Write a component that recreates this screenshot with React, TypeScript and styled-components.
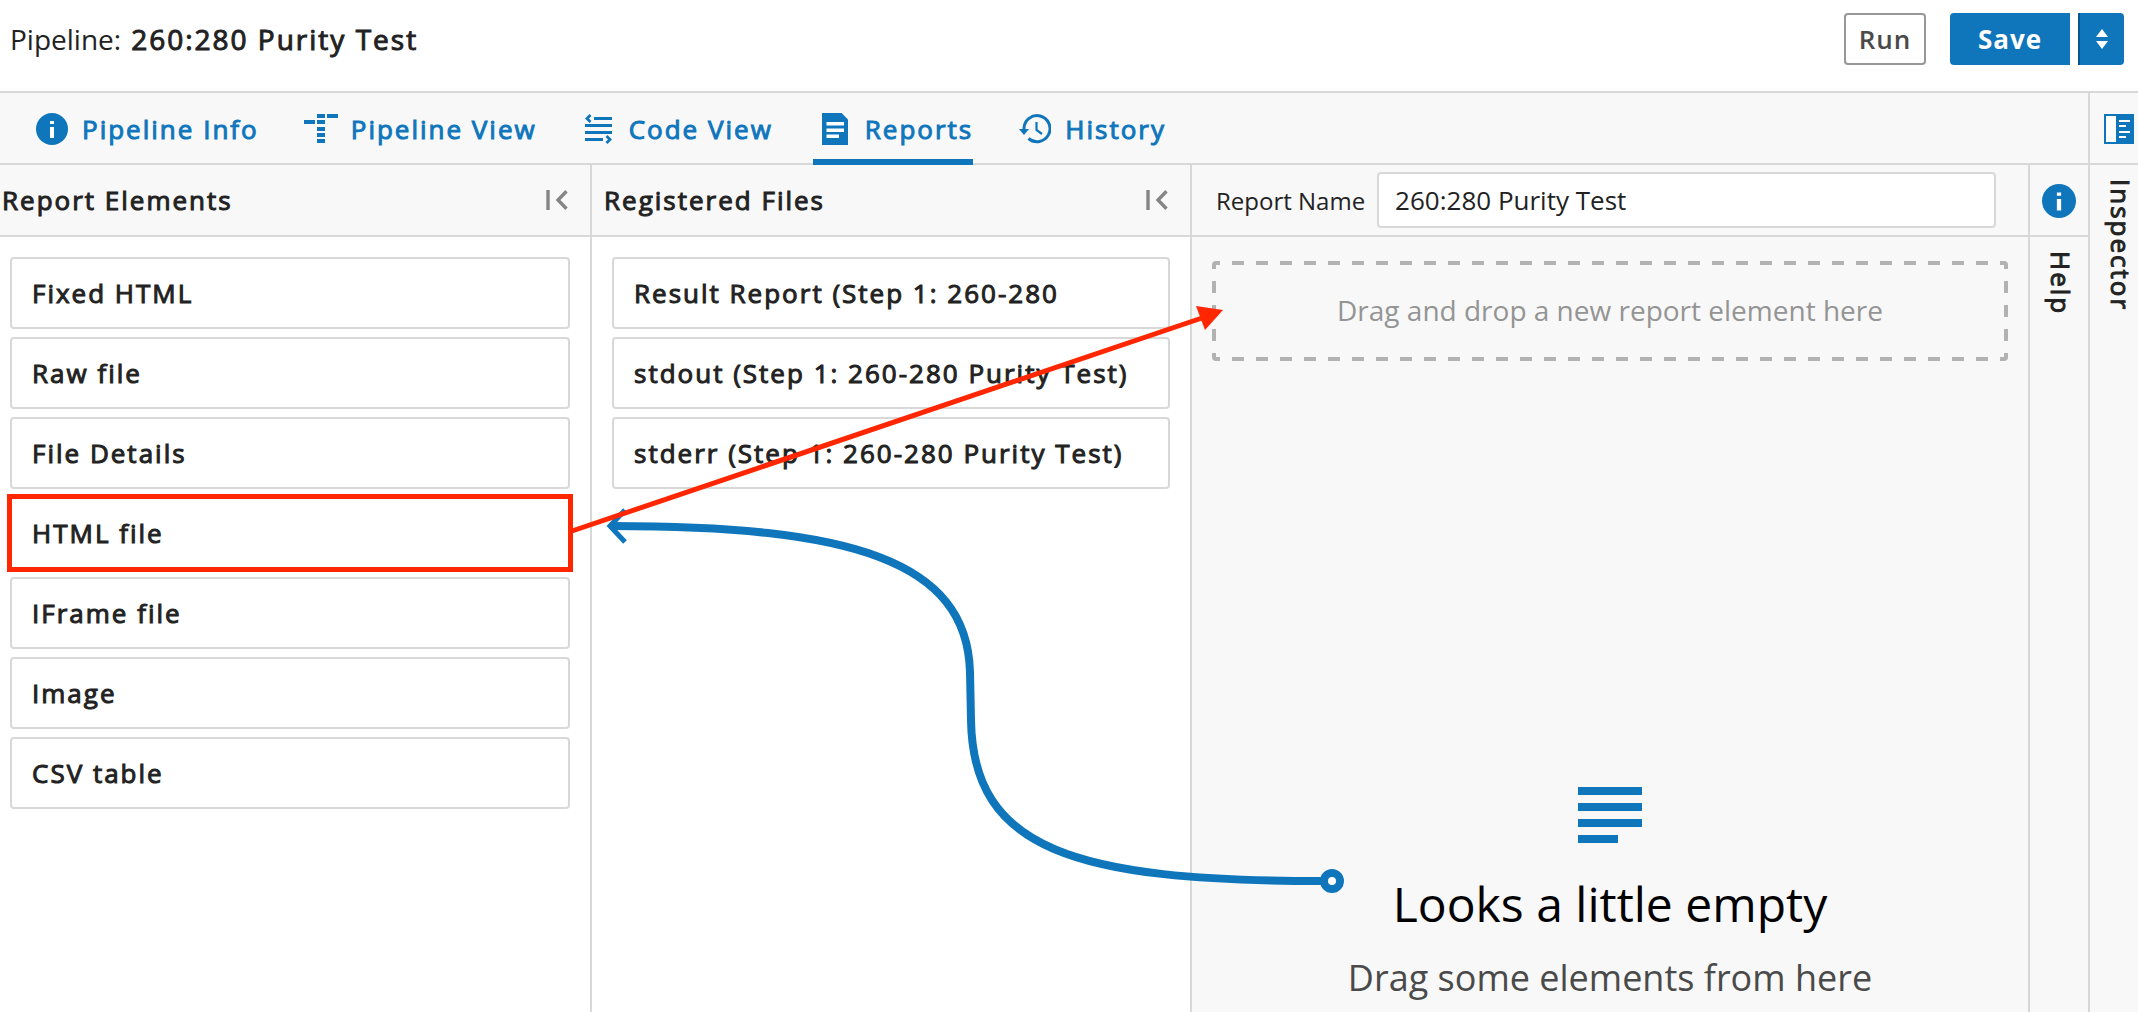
import React from "react";
import styled, { createGlobalStyle, css } from "styled-components";

const blue = "#0f76bc";
const line = "#d8d8d8";
const ink = "#222222";
const pale = "#f8f8f8";
const red = "#ff2600";

const Global = createGlobalStyle`
  *, *::before, *::after { box-sizing: border-box; }
  body {
    margin: 0;
    background: #ffffff;
    color: ${ink};
    font-family: "Open Sans", "Noto Sans", sans-serif;
    font-size: 26px;
    overflow: hidden;
  }
  button, input { font: inherit; }
  h1, h2, p, ul { margin: 0; padding: 0; }
`;

/* Emphasised text: the regular face, thickened and openly tracked. */
const emphasis = css`
  font-weight: 400;
  letter-spacing: 2px;
  -webkit-text-stroke: 1px currentColor;
`;

const Page = styled.div`
  display: flex;
  flex-direction: column;
  height: 100vh;
`;

const Header = styled.header`
  display: flex;
  align-items: center;
  justify-content: space-between;
  height: 93px;
  padding: 0 14px 14px 10px;
  border-bottom: 2px solid ${line};
`;

const Title = styled.h1`
  display: flex;
  gap: 10px;
  font-size: 28px;
  font-weight: 400;
  line-height: 40px;

  strong { ${emphasis} }
`;

const Actions = styled.div`
  display: flex;
  gap: 24px;
`;

const SaveGroup = styled.div`
  display: flex;
  gap: 8px;
`;

const Button = styled.button`
  display: flex;
  align-items: center;
  justify-content: center;
  height: 52px;
  padding: 0;
  border: 0;
  font-weight: 600;
  letter-spacing: 1px;
  cursor: pointer;
`;

const RunButton = styled(Button)`
  width: 82px;
  border: 2px solid #979797;
  border-radius: 4px;
  background: #ffffff;
  color: #4a4a4a;
`;

const SaveButton = styled(Button)`
  width: 120px;
  border-radius: 4px 0 0 4px;
  background: ${blue};
  color: #ffffff;
  font-weight: 700;
`;

const SaveMenuButton = styled(Button)`
  width: 46px;
  border-left: 2px solid #07568c;
  border-radius: 0 4px 4px 0;
  background: ${blue};
  color: #ffffff;
`;

const Body = styled.div`
  display: flex;
  flex: 1;
  min-height: 0;
`;

const Main = styled.main`
  display: flex;
  flex: 1;
  flex-direction: column;
  min-width: 0;
`;

const Tabs = styled.nav`
  display: flex;
  gap: 40px;
  height: 72px;
  padding-left: 30px;
  border-bottom: 2px solid ${line};
  background: ${pale};
`;

const Tab = styled.a<{ $active?: boolean }>`
  ${emphasis}
  display: flex;
  align-items: center;
  gap: 8px;
  height: 72px;
  padding-top: 6px;
  border-bottom: 6px solid ${(p) => (p.$active ? blue : "transparent")};
  color: ${blue};
  text-decoration: none;
  white-space: nowrap;
`;

const TabIcon = styled.span`
  display: flex;
  justify-content: center;
  width: 44px;
`;

const Workspace = styled.div`
  position: relative;
  display: flex;
  flex: 1;
  min-height: 0;
`;

const Panel = styled.section<{ $width: number }>`
  flex: none;
  width: ${(p) => p.$width}px;
  border-right: 2px solid ${line};
  background: #ffffff;
`;

const PanelHead = styled.div<{ $inset: number }>`
  display: flex;
  align-items: center;
  justify-content: space-between;
  height: 72px;
  padding: 0 22px 0 ${(p) => p.$inset}px;
  border-bottom: 2px solid ${line};
  background: ${pale};
`;

const PanelTitle = styled.h2`
  ${emphasis}
  font-size: 26px;
  line-height: 36px;
`;

const CollapseButton = styled.button`
  display: flex;
  padding: 0;
  border: 0;
  background: none;
  cursor: pointer;
`;

const CardList = styled.ul`
  display: flex;
  flex-direction: column;
  gap: 8px;
  padding: 20px;
  list-style: none;
`;

const ElementList = styled(CardList)`
  padding-left: 10px;
`;

const Card = styled.li<{ $marked?: boolean }>`
  ${emphasis}
  height: 72px;
  padding: 16px 20px;
  border: 2px solid ${line};
  border-radius: ${(p) => (p.$marked ? 0 : 4)}px;
  outline: ${(p) => (p.$marked ? `5px solid ${red}` : "none")};
  outline-offset: -2px;
  background: #ffffff;
  line-height: 36px;
  white-space: nowrap;
`;

const Canvas = styled.section`
  display: flex;
  flex: 1;
  flex-direction: column;
  min-width: 0;
  background: ${pale};
`;

const NameBar = styled.div`
  display: flex;
  flex: none;
  align-items: center;
  gap: 12px;
  height: 72px;
  padding: 0 32px 0 24px;
  border-bottom: 2px solid ${line};
`;

const NameLabel = styled.label`
  font-size: 24px;
  white-space: nowrap;
`;

const NameInput = styled.input`
  flex: 1;
  min-width: 0;
  height: 56px;
  padding: 0 16px;
  border: 2px solid ${line};
  border-radius: 4px;
  background: #ffffff;
  color: ${ink};
`;

const dashes = (angle: string) =>
  `repeating-linear-gradient(${angle}, #b2b2b2 0 8px, transparent 8px 20px, #b2b2b2 20px 24px)`;

const DropZone = styled.div`
  display: flex;
  flex: none;
  align-items: center;
  justify-content: center;
  height: 100px;
  margin: 24px 20px 0;
  padding-bottom: 2px;
  border-radius: 4px;
  background:
    ${dashes("90deg")} top / 100% 4px no-repeat,
    ${dashes("90deg")} bottom / 100% 4px no-repeat,
    ${dashes("180deg")} left / 4px 100% no-repeat,
    ${dashes("180deg")} right / 4px 100% no-repeat;
  color: #949494;
  font-size: 28px;
`;

const EmptyState = styled.div`
  display: flex;
  flex-direction: column;
  align-items: center;
  margin-top: 426px;
  text-align: center;
`;

const EmptyTitle = styled.h2`
  margin-top: 28px;
  color: #000000;
  font-size: 48px;
  font-weight: 400;
  line-height: 66px;
`;

const EmptyText = styled.p`
  margin-top: 16px;
  color: #4a4a4a;
  font-size: 36px;
  line-height: 50px;
`;

const Rail = styled.aside<{ $width: number }>`
  display: flex;
  flex: none;
  flex-direction: column;
  width: ${(p) => p.$width}px;
  overflow: hidden;
  border-left: 2px solid ${line};
  background: ${pale};
`;

const RailHead = styled.div`
  display: flex;
  flex: none;
  align-items: center;
  justify-content: center;
  width: 58px;
  height: 72px;
  padding-top: 2px;
  border-bottom: 2px solid ${line};
`;

const RailLabel = styled.span`
  ${emphasis}
  width: 62px;
  padding-top: 14px;
  line-height: 62px;
  writing-mode: vertical-rl;
`;

const Annotations = styled.svg`
  position: absolute;
  top: 0;
  left: 0;
  overflow: visible;
  pointer-events: none;
`;

const InfoIcon = ({ size }: { size: number }) => (
  <svg width={size} height={size} viewBox="0 0 32 32" aria-hidden="true">
    <circle cx="16" cy="16" r="16" fill={blue} />
    <path d="M14 8h4v3h-4zM14 14h4v11h-4z" fill="#fff" />
  </svg>
);

const PipelineIcon = () => (
  <svg width="34" height="30" viewBox="0 0 34 30" fill={blue} aria-hidden="true">
    <path d="M13 0h8v4h-8zM23 0h11v4H23zM0 6h11v4H0zM13 6h8v4h-8zM13 13h8v4h-8zM13 19h8v4h-8zM13 25h8v4h-8z" />
  </svg>
);

const CodeIcon = () => (
  <svg width="28" height="30" viewBox="0 0 28 30" fill={blue} aria-hidden="true">
    <path d="M9 3h18v3H9zM0 10h27v3H0zM0 17h27v3H0zM0 24h18v3H0z" />
    <path d="M5.500 1 2 4.500 5.500 8M21.500 22l3.500 3.500-3.500 3.500" fill="none" stroke={blue} strokeWidth="2.800" />
  </svg>
);

const ReportIcon = () => (
  <svg width="26" height="32" viewBox="0 0 26 32" aria-hidden="true">
    <path d="M0 0h19.500l6.500 6.500V32H0z" fill={blue} />
    <path d="M4.500 9H22v3.500H4.500zM4.500 15.500H22V19H4.500zM4.500 21.500h12.500V25H4.500z" fill="#fff" />
  </svg>
);

const HistoryIcon = () => (
  <svg width="32" height="30" viewBox="0 0 32 30" fill="none" stroke={blue} aria-hidden="true">
    <path d="M5 16V14.500A13 13 0 1 1 9.500 24.500" strokeWidth="3" />
    <path d="M0 15h10l-5 6z" fill={blue} stroke="none" />
    <path d="M17.500 8v8l5.500 4" strokeWidth="2.200" />
  </svg>
);

const CollapseIcon = () => (
  <svg width="22" height="20" viewBox="0 0 22 20" fill="none" stroke="#858585" strokeWidth="3.400" aria-hidden="true">
    <path d="M2 0v20M20.500 1.200 12 10l8.500 8.800" />
  </svg>
);

const SortIcon = () => (
  <svg width="12" height="20" viewBox="0 0 12 20" fill="#fff" aria-hidden="true">
    <path d="M6 0l6 8H0zM6 20l6-8H0z" />
  </svg>
);

const InspectorIcon = () => (
  <svg width="30" height="30" viewBox="0 0 30 30" aria-hidden="true">
    <path d="M0 0h30v30H0z" fill={blue} />
    <path d="M2 2h10v26H2zM15 6h11v2H15zM15 11h7v2h-7zM15 17h11v2H15zM15 22h7v2h-7z" fill="#fff" />
  </svg>
);

const LinesIcon = () => (
  <svg width="64" height="56" viewBox="0 0 64 56" fill={blue} aria-hidden="true">
    <path d="M0 0h64v8H0zM0 16h64v8H0zM0 32h64v8H0zM0 48h40v8H0z" />
  </svg>
);

const tabs = [
  { label: "Pipeline Info", icon: <InfoIcon size={32} /> },
  { label: "Pipeline View", icon: <PipelineIcon /> },
  { label: "Code View", icon: <CodeIcon /> },
  { label: "Reports", icon: <ReportIcon />, active: true },
  { label: "History", icon: <HistoryIcon /> },
];

const elements = ["Fixed HTML", "Raw file", "File Details", "HTML file", "IFrame file", "Image", "CSV table"];

const files = [
  "Result Report (Step 1: 260-280",
  "stdout (Step 1: 260-280 Purity Test)",
  "stderr (Step 1: 260-280 Purity Test)",
];

export default function App() {
  return (
    <Page>
      <Global />
      <Header>
        <Title>
          <span>Pipeline:</span>
          <strong>260:280 Purity Test</strong>
        </Title>
        <Actions>
          <RunButton type="button">Run</RunButton>
          <SaveGroup>
            <SaveButton type="button">Save</SaveButton>
            <SaveMenuButton type="button" aria-label="More save options">
              <SortIcon />
            </SaveMenuButton>
          </SaveGroup>
        </Actions>
      </Header>
      <Body>
        <Main>
          <Tabs>
            {tabs.map((t) => (
              <Tab key={t.label} href="#" $active={t.active} aria-current={t.active ? "page" : undefined}>
                <TabIcon>{t.icon}</TabIcon>
                {t.label}
              </Tab>
            ))}
          </Tabs>
          <Workspace>
            <Panel $width={592}>
              <PanelHead $inset={2}>
                <PanelTitle>Report Elements</PanelTitle>
                <CollapseButton type="button" aria-label="Collapse report elements">
                  <CollapseIcon />
                </CollapseButton>
              </PanelHead>
              <ElementList>
                {elements.map((name) => (
                  <Card key={name} draggable $marked={name === "HTML file"}>
                    {name}
                  </Card>
                ))}
              </ElementList>
            </Panel>
            <Panel $width={600}>
              <PanelHead $inset={12}>
                <PanelTitle>Registered Files</PanelTitle>
                <CollapseButton type="button" aria-label="Collapse registered files">
                  <CollapseIcon />
                </CollapseButton>
              </PanelHead>
              <CardList>
                {files.map((name) => (
                  <Card key={name} draggable>
                    {name}
                  </Card>
                ))}
              </CardList>
            </Panel>
            <Canvas>
              <NameBar>
                <NameLabel htmlFor="report-name">Report Name</NameLabel>
                <NameInput id="report-name" type="text" defaultValue="260:280 Purity Test" />
              </NameBar>
              <DropZone>Drag and drop a new report element here</DropZone>
              <EmptyState>
                <LinesIcon />
                <EmptyTitle>Looks a little empty</EmptyTitle>
                <EmptyText>Drag some elements from here</EmptyText>
              </EmptyState>
            </Canvas>
            <Rail $width={60}>
              <RailHead>
                <InfoIcon size={34} />
              </RailHead>
              <RailLabel>Help</RailLabel>
            </Rail>
            <Annotations width="1340" height="740" viewBox="0 165 1340 740" fill="none" aria-hidden="true">
              <path
                d="M612 526C850 526 967 560 970 672L971 720C973 850 1075 881 1322 881"
                stroke={blue}
                strokeWidth="8"
              />
              <path d="M625 510 610 526 625 542" stroke={blue} strokeWidth="5" />
              <circle cx="1332" cy="881" r="8" stroke={blue} strokeWidth="8" fill="#fff" />
              <path d="M572 531 1202 318" stroke={red} strokeWidth="5" />
              <path d="M1223 310 1196 306 1205 330z" fill={red} />
            </Annotations>
          </Workspace>
        </Main>
        <Rail $width={50}>
          <RailHead>
            <InspectorIcon />
          </RailHead>
          <RailLabel>Inspector</RailLabel>
        </Rail>
      </Body>
    </Page>
  );
}
